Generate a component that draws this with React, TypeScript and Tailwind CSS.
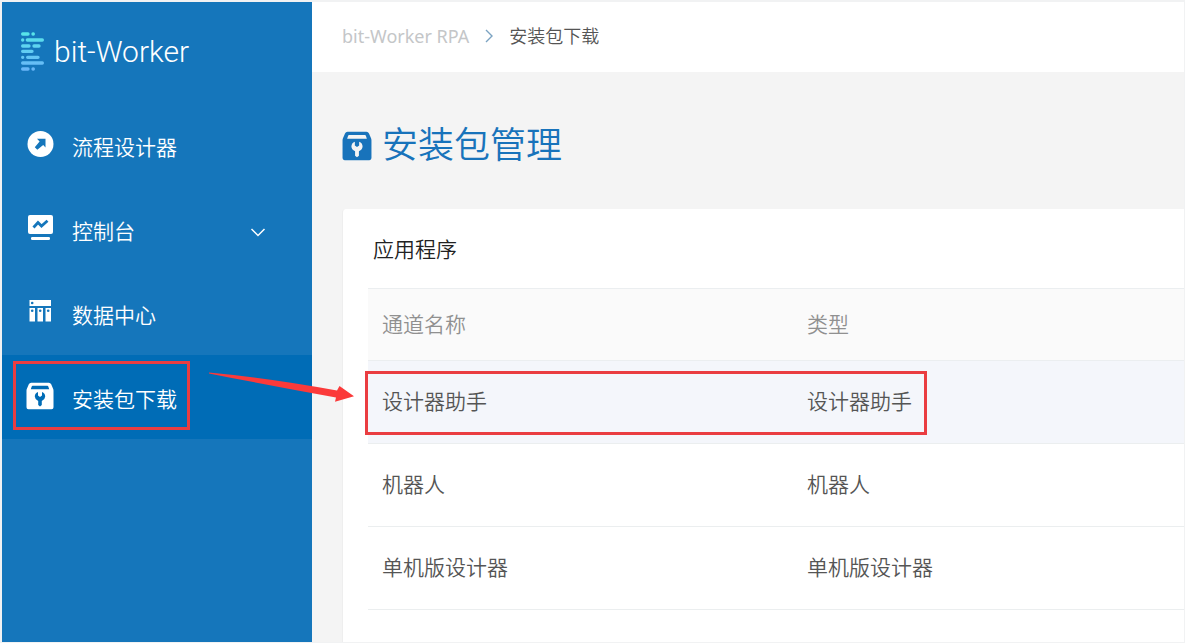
import React, { useState } from 'react';

interface NavItem {
  id: string;
  label: string;
  icon: React.ReactNode;
  expandable?: boolean;
}

interface Package {
  name: string;
  type: string;
}

const LogoMark: React.FC = () => (
  <svg width="23" height="39" viewBox="0 0 69 117" fill="none" aria-hidden="true">
    <defs>
      <linearGradient id="logo" x1="0" y1="0" x2="0" y2="117" gradientUnits="userSpaceOnUse">
        <stop offset="0" stopColor="#56e6e8" />
        <stop offset="0.5" stopColor="#62cdf3" />
        <stop offset="1" stopColor="#68b4f8" />
      </linearGradient>
    </defs>
    <path
      d="M5 6H21M36 6H37M5 24H5.1M19 24H64M5 42H24M39 42H54M5 58H33M5 76H5.1M20 76H51M5 93H64M5 111H21M36 111H37"
      stroke="url(#logo)"
      strokeWidth="10"
      strokeLinecap="round"
    />
  </svg>
);

const DesignerIcon: React.FC = () => (
  <svg width="28" height="28" viewBox="0 0 28 28" aria-hidden="true">
    <circle cx="14.5" cy="14" r="13" fill="#fff" />
    <path d="M11 8.8H19.5V17.5L17.2 15L11.3 19.8L8.8 17.3L13.6 11.4Z" fill="#1576bb" />
  </svg>
);

const ConsoleIcon: React.FC = () => (
  <svg width="28" height="28" viewBox="0 0 28 28" fill="none" aria-hidden="true">
    <rect x="2" y="1" width="25" height="19" rx="2" fill="#fff" />
    <rect x="5" y="23" width="19" height="3" rx="1.2" fill="#fff" />
    <path d="M7.5 13.5L12 8.5L15.5 12L21.5 6.8" stroke="#1576bb" strokeWidth="2.8" />
  </svg>
);

const DataIcon: React.FC = () => (
  <svg width="28" height="28" viewBox="0 0 28 28" aria-hidden="true">
    <path d="M3.5 2H25V8H3.5ZM3.5 10H9V23.5H3.5ZM11.5 10H17V23.5H11.5ZM19.5 10H25V23.5H19.5Z" fill="#fff" />
    <g fill="#1576bb">
      <circle cx="6.2" cy="5" r="1.3" />
      <circle cx="6.2" cy="12.8" r="1.3" />
      <circle cx="14.2" cy="12.8" r="1.3" />
      <circle cx="22.2" cy="12.8" r="1.3" />
    </g>
  </svg>
);

const PackageIcon: React.FC<{ className?: string }> = ({ className }) => (
  <svg className={className} viewBox="0 0 28 28" fill="currentColor" aria-hidden="true">
    <path
      fillRule="evenodd"
      d="M5.2 .8H22.8Q24.5 .8 25.2 2.3L27.2 7Q27.5 7.8 27.5 8.8V25.3Q27.5 27.2 25.6 27.2H2.4Q.5 27.2 .5 25.3V8.8Q.5 7.8 .8 7L2.8 2.3Q3.5 .8 5.2 .8ZM6.6 3.8Q6 3.8 5.7 4.4L4.8 7.2H23.2L22.3 4.4Q22 3.8 21.4 3.8ZM12 10Q8.8 11.2 8.8 14.4Q8.8 17 12.2 19V23L14 24.4L15.8 23V19Q19.2 17 19.2 14.4Q19.2 11.2 16 10V13.6L14 15L12 13.6Z"
    />
  </svg>
);

const navItems: NavItem[] = [
  { id: 'designer', label: '流程设计器', icon: <DesignerIcon /> },
  { id: 'console', label: '控制台', icon: <ConsoleIcon />, expandable: true },
  { id: 'data', label: '数据中心', icon: <DataIcon /> },
  { id: 'download', label: '安装包下载', icon: <PackageIcon className="size-7" /> },
];

const packages: Package[] = [
  { name: '设计器助手', type: '设计器助手' },
  { name: '机器人', type: '机器人' },
  { name: '单机版设计器', type: '单机版设计器' },
];

const Sidebar: React.FC = () => {
  const [active, setActive] = useState('download');

  return (
    <aside className="w-[310px] shrink-0 bg-[#1576bb] text-white">
      <a href="#home" className="flex h-[101px] items-center gap-2.5 pb-0.5 pl-[19px]">
        <LogoMark />
        <span className="font-['Roboto',sans-serif] text-[30px] leading-9 font-[350]">bit-Worker</span>
      </a>
      <nav className="relative">
        {navItems.map((item) => (
          <button
            key={item.id}
            type="button"
            onClick={() => setActive(item.id)}
            className={`flex h-[84px] w-full items-center pr-11 pl-6 text-left ${
              active === item.id ? 'bg-[#006cb6]' : ''
            }`}
          >
            <span className="mb-0.5">{item.icon}</span>
            <span className="ml-[18px] flex-1 pt-1 text-[21px] leading-8">{item.label}</span>
            {item.expandable && (
              <svg className="mt-1.5" width="20" height="20" viewBox="0 0 20 20" fill="none" aria-hidden="true">
                <path d="M3.5 7L10 13.5L16.5 7" stroke="#fff" strokeWidth="1.5" />
              </svg>
            )}
          </button>
        ))}
        <div className="pointer-events-none absolute bottom-[9px] left-[11px] h-[69px] w-[177px] border-3 border-[#ea3d41]" />
        <svg
          className="pointer-events-none absolute bottom-8 left-[206px] z-10"
          width="148"
          height="36"
          viewBox="0 0 148 36"
          aria-hidden="true"
        >
          <path d="M1 1.6Q60 7 129 19.6L131.5 15L146 25.3L127 30.7L128 26.5Q64 15 1 2.4Z" fill="#fb3a3a" />
        </svg>
      </nav>
    </aside>
  );
};

const PackageTable: React.FC = () => (
  <table className="w-full table-fixed border-collapse text-left text-[21px] leading-8">
    <thead>
      <tr className="h-[72px] border-y border-[#ebeef0] bg-[#fafafa] text-[#909090]">
        <th className="w-[425px] pb-0.5 pl-3.5 font-[350]">通道名称</th>
        <th className="pb-0.5 pl-3.5 font-[350]">类型</th>
      </tr>
    </thead>
    <tbody>
      {packages.map((pkg, index) => (
        <tr
          key={pkg.name}
          className={`h-[83px] border-b border-[#ebeeef] text-[#555] ${index === 0 ? 'bg-[#f4f6fb]' : ''}`}
        >
          <td className="relative pb-0.5 pl-3.5">
            {pkg.name}
            {index === 0 && (
              <span className="pointer-events-none absolute top-2.5 -left-[3px] h-16 w-[562px] border-3 border-[#ea3d41]" />
            )}
          </td>
          <td className="pb-0.5 pl-3.5">{pkg.type}</td>
        </tr>
      ))}
    </tbody>
  </table>
);

const App: React.FC = () => {
  return (
    <div className="flex min-h-screen border-t-2 border-r border-b border-l-2 border-[#f1f2f3] bg-[#f4f4f4] font-['Noto_Sans','Noto_Sans_CJK_SC',sans-serif] font-[350]">
      <Sidebar />
      <div className="flex min-w-0 flex-1 flex-col">
        <header className="flex h-[70px] items-center gap-3.5 bg-white pb-0.5 pl-[30px] text-lg">
          <a href="#rpa" className="font-normal text-[#c4c6c8]">bit-Worker RPA</a>
          <svg width="12" height="16" viewBox="0 0 12 16" fill="none" aria-hidden="true">
            <path d="M3 2L9 8L3 14" stroke="#7ba3c2" strokeWidth="1.4" />
          </svg>
          <span className="text-[#555]">安装包下载</span>
        </header>
        <main className="flex flex-1 flex-col pl-[30px]">
          <h1 className="flex h-[137px] items-center gap-2.5 pt-2 text-4xl text-[#1873bb]">
            <PackageIcon className="mt-0.5 size-[30px]" />
            安装包管理
          </h1>
          <section className="flex-1 rounded-tl-sm border-l border-[#eee] bg-white pl-[25px]">
            <h2 className="flex h-[79px] items-center pt-0.5 pl-[5px] text-[21px] text-[#222]">应用程序</h2>
            <PackageTable />
          </section>
        </main>
      </div>
    </div>
  );
};

export default App;
